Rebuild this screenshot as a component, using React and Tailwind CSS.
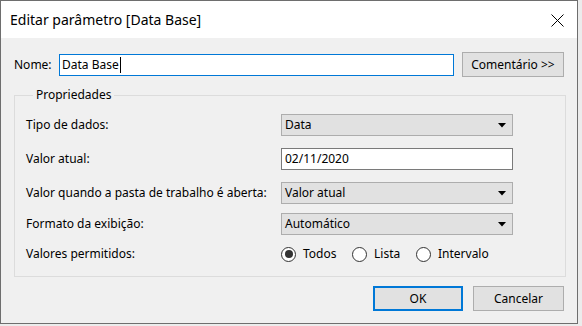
import React from "react";

const font = { fontFamily: '"Noto Sans", "Open Sans", sans-serif' };

function Select({ value }) {
  return (
    <div className="flex h-[22px] w-[232px] items-center justify-between border border-[#adadad] bg-[#e1e1e1] pl-[3px] pr-[6px]">
      <span className="leading-none">{value}</span>
      <svg width="8" height="5" viewBox="0 0 8 5">
        <path d="M0 0 L8 0 L4 4.5 Z" fill="#000" />
      </svg>
    </div>
  );
}

function Radio({ checked, label, w }) {
  return (
    <div className={"flex items-center gap-[7px] " + w}>
      <div className="flex h-[15px] w-[15px] items-center justify-center rounded-full border border-[#333] bg-white">
        {checked && <div className="h-[8px] w-[8px] rounded-full bg-[#333]" />}
      </div>
      <span className="leading-none">{label}</span>
    </div>
  );
}

function Row({ label, children, className = "" }) {
  return (
    <div className={"flex h-[22px] items-center " + className}>
      <div className="w-[255px] leading-none">{label}</div>
      {children}
    </div>
  );
}

export default function App() {
  return (
    <div className="h-[326px] w-[582px] bg-[#ececec]" style={font}>
      <div className="flex h-[324px] w-[578px] flex-col border border-[#6e6e6e] bg-[#f0f0f0] text-[12px] text-black">
        <div className="flex h-[37px] shrink-0 items-center justify-between bg-white pl-[9px] pr-[13px]">
          <span className="text-[14px] leading-none">Editar parâmetro [Data Base]</span>
          <svg width="13" height="13" viewBox="0 0 13 13" className="mt-[1px]">
            <path d="M0.5 0.5 L12.5 12.5 M12.5 0.5 L0.5 12.5" stroke="#000" strokeWidth="1" fill="none" />
          </svg>
        </div>
        <div className="flex flex-col px-[13px] pt-[14px]">
          <div className="flex h-[25px] items-center">
            <div className="w-[45px] leading-none">Nome:</div>
            <div className="flex h-[22px] w-[395px] items-center border border-[#0078d7] bg-white pl-[2px]">
              <span className="border-r border-black pr-[1px] leading-[16px]">Data Base</span>
            </div>
            <div className="ml-[8px] flex h-[25px] w-[102px] items-center justify-center border border-[#adadad] bg-[#e1e1e1] leading-none">
              Comentário &gt;&gt;
            </div>
          </div>
          <fieldset className="mt-[10px] h-[190px] w-[552px] border border-[#dcdcdc] pl-[11px]">
            <legend className="ml-[7px] px-[3px] leading-[16px]">Propriedades</legend>
            <Row label="Tipo de dados:" className="mt-[11px]">
              <Select value="Data" />
            </Row>
            <Row label="Valor atual:" className="mt-[12px]">
              <div className="flex h-[22px] w-[232px] items-center border border-[#7a7a7a] bg-white pl-[3px] leading-none">
                02/11/2020
              </div>
            </Row>
            <Row label="Valor quando a pasta de trabalho é aberta:" className="mt-[12px]">
              <Select value="Valor atual" />
            </Row>
            <Row label="Formato da exibição:" className="mt-[9px]">
              <Select value="Automático" />
            </Row>
            <Row label="Valores permitidos:" className="mt-[8px]">
              <div className="flex items-center">
                <Radio checked label="Todos" w="w-[71px]" />
                <Radio label="Lista" w="w-[64px]" />
                <Radio label="Intervalo" w="" />
              </div>
            </Row>
          </fieldset>
          <div className="mt-[9px] flex justify-end gap-[10px]">
            <div className="flex h-[25px] w-[90px] items-center justify-center border-2 border-[#0078d7] bg-[#e1e1e1] leading-none">
              OK
            </div>
            <div className="flex h-[25px] w-[91px] items-center justify-center border border-[#adadad] bg-[#e1e1e1] leading-none">
              Cancelar
            </div>
          </div>
        </div>
      </div>
    </div>
  );
}
